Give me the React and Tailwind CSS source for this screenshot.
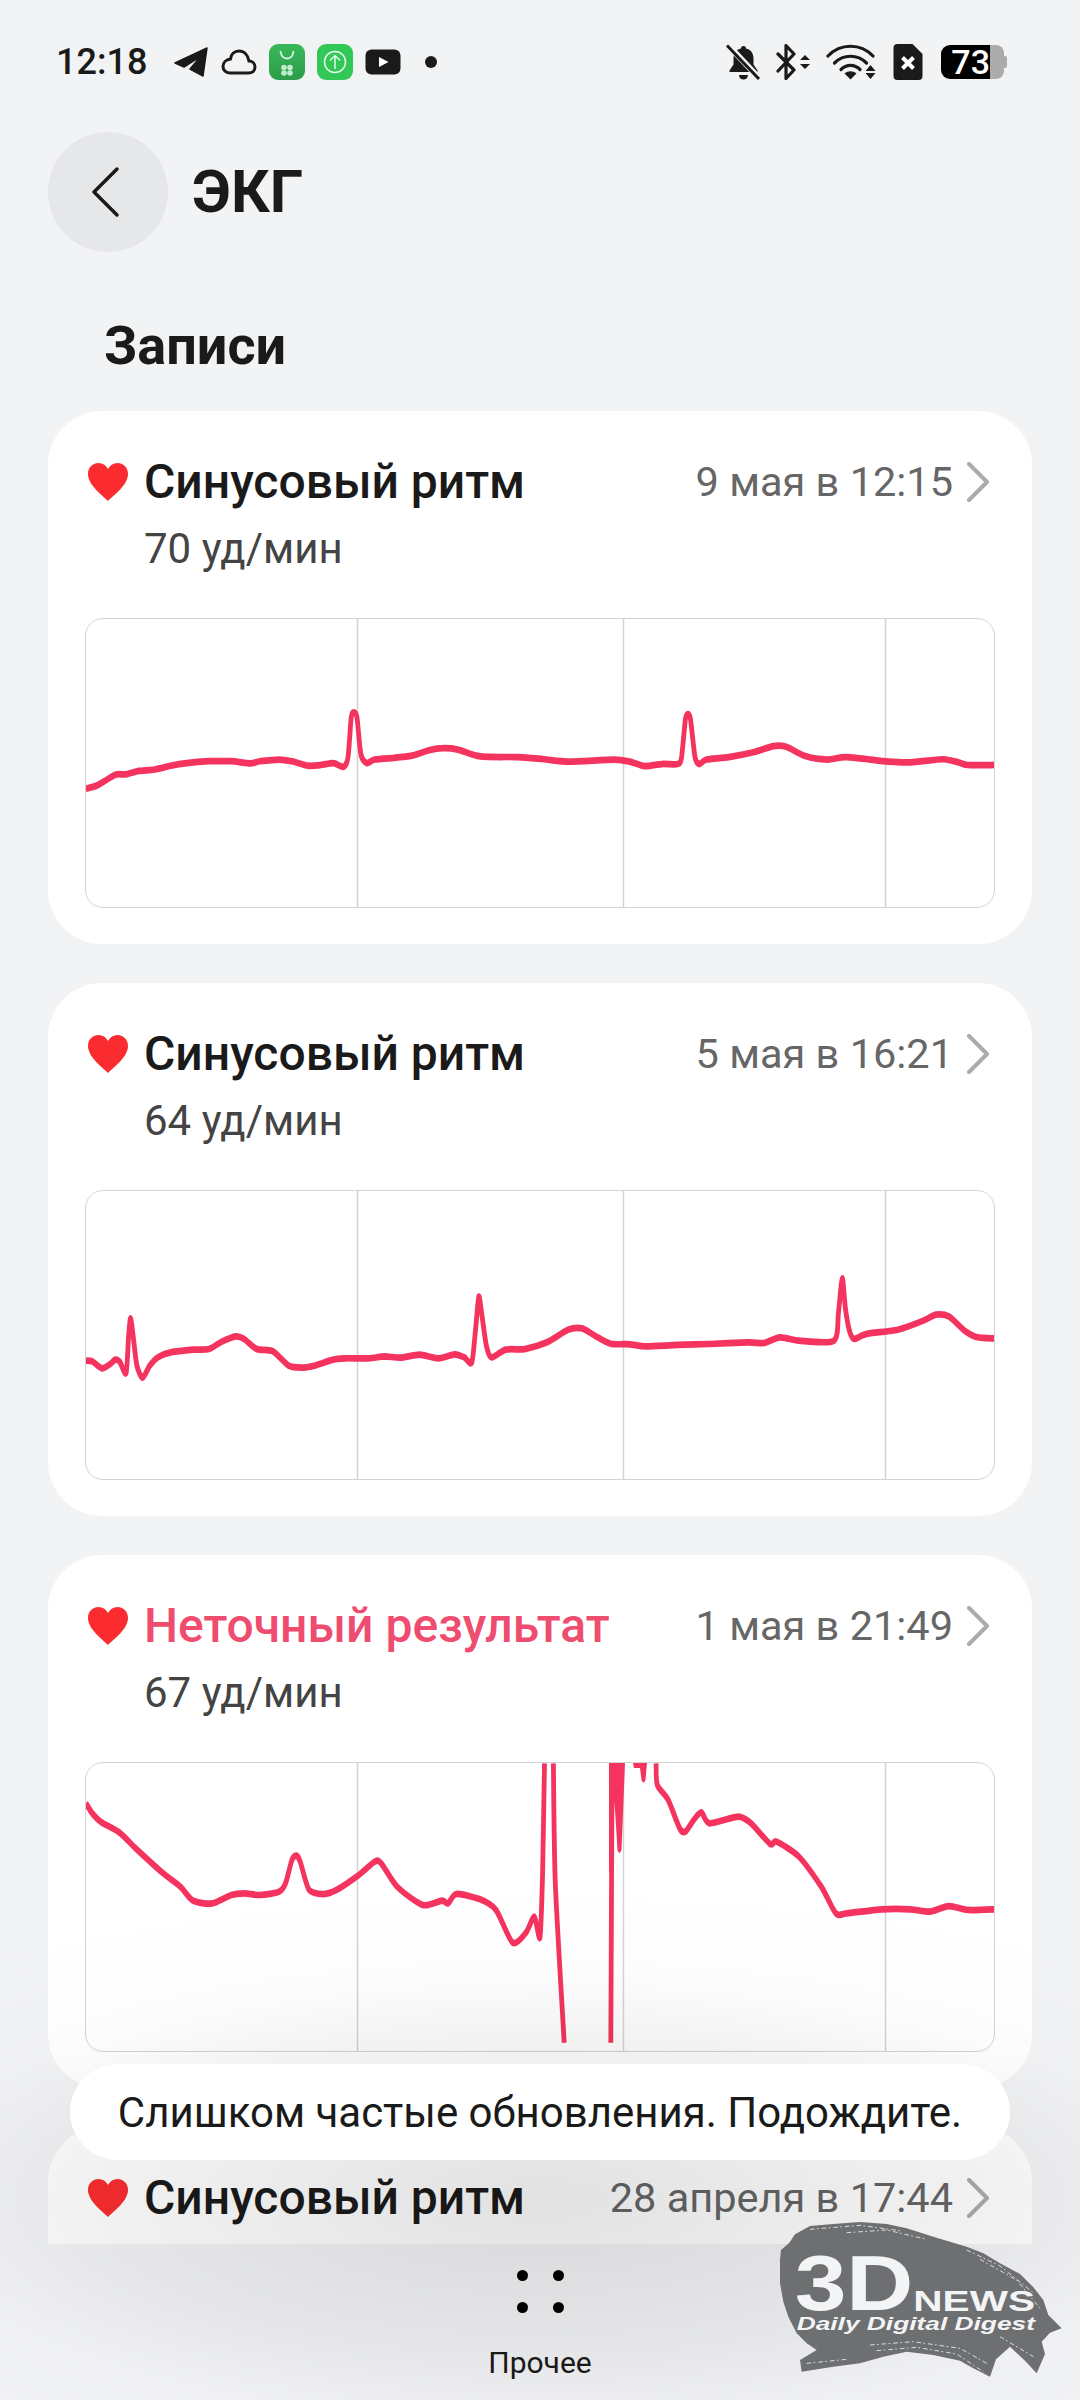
import React from 'react';

// Chart points are read off the zoomed reference, then mapped to the 910x290 chart box.
// The trace is stretched vertically in the picture, so it is drawn inside a scaled group.
const STRETCH = 1.4;
const mapX = (x) => 40 + x / 1.568 - 85;
const toPath = (points, k, off) => {
  const p = points.map(([x, y]) => [mapX(x), (y / k - off) / STRETCH]);
  let d = `M${p[0][0].toFixed(1)} ${p[0][1].toFixed(1)}`;
  for (let i = 0; i < p.length - 1; i++) {
    const a = p[i - 1] || p[i];
    const b = p[i];
    const c = p[i + 1];
    const e = p[i + 2] || c;
    const c1x = b[0] + (c[0] - a[0]) / 8;
    const c1y = b[1] + (c[1] - a[1]) / 8;
    const c2x = c[0] - (e[0] - b[0]) / 8;
    const c2y = c[1] - (e[1] - b[1]) / 8;
    d += `C${c1x.toFixed(1)} ${c1y.toFixed(1)} ${c2x.toFixed(1)} ${c2y.toFixed(1)} ${c[0].toFixed(1)} ${c[1].toFixed(1)}`;
  }
  return d;
};

const chart1 = [[[72,1132],[90,1122],[105,1105],[120,1090],[135,1090],[155,1080],[180,1076],[205,1065],[230,1057],[265,1052],[300,1052],[330,1058],[345,1052],[375,1047],[395,1052],[420,1065],[440,1063],[460,1057],[476,1068],[483,1040],[488,925],[492,910],[497,925],[503,1030],[512,1057],[525,1047],[555,1042],[585,1035],[610,1020],[632,1014],[655,1018],[690,1038],[750,1040],[790,1046],[830,1053],[900,1047],[925,1053],[948,1066],[975,1060],[1000,1060],[1006,1040],[1012,930],[1016,915],[1020,930],[1027,1040],[1034,1060],[1045,1047],[1080,1040],[1120,1025],[1150,1008],[1170,1010],[1200,1037],[1235,1047],[1265,1040],[1330,1053],[1365,1055],[1415,1046],[1440,1055],[1455,1063],[1497,1063]]].map((s) => toPath(s, 2.904, 219));

const chart2 = [[[72,575],[82,577],[97,598],[110,585],[118,572],[125,578],[135,612],[139,500],[142,448],[146,500],[152,590],[161,626],[172,590],[185,565],[205,550],[240,542],[265,540],[285,518],[307,502],[320,510],[340,540],[365,547],[390,590],[410,596],[430,590],[460,572],[480,568],[515,568],[540,562],[565,566],[595,557],[625,568],[650,556],[665,565],[677,580],[683,480],[688,383],[693,440],[700,530],[708,565],[730,542],[760,540],[795,520],[828,482],[850,478],[870,500],[895,524],[925,526],[950,532],[1000,528],[1050,525],[1110,520],[1135,522],[1160,505],[1190,515],[1245,515],[1252,430],[1258,328],[1263,420],[1270,490],[1277,510],[1295,495],[1345,482],[1385,455],[1405,437],[1425,442],[1450,485],[1470,505],[1497,508]]].map((s) => toPath(s, 3, 21));

const chart3 = [
  [[72,190],[82,220],[95,245],[125,278],[150,325],[190,395],[220,440],[240,482],[270,490],[300,465],[320,460],[345,465],[375,455],[385,430],[395,360],[402,347],[408,365],[422,450],[445,462],[465,450],[500,405],[525,365],[535,370],[560,440],[600,495],[630,482],[640,490],[653,462],[690,478],[715,510],[741,608],[762,578],[775,530],[784,592],[788,400],[791,70]],
  [[805,70],[808,430],[822,908]],
  [[895,908],[897,70]],
  [[966,70],[968,135],[985,180],[1003,265],[1012,275],[1025,240],[1037,217],[1050,250],[1095,230],[1115,250],[1145,312],[1155,305],[1190,350],[1225,440],[1248,520],[1265,520],[1320,508],[1365,508],[1395,515],[1425,498],[1455,510],[1497,508]],
].map((s) => toPath(s, 3, 22));

// the solid blobs where the trace leaves the top of the chart
const chart3Blobs = [
  'M524 1H540L536.500 88Q534 94 532.500 88L529.500 40L526 110L524 110Z',
  'M548 1H562L560.500 18Q558.500 23 556.500 18L555 6H549Z',
];

const records = [
  { title: 'Синусовый ритм', date: '9 мая в 12:15', bpm: '70 уд/мин', paths: chart1 },
  { title: 'Синусовый ритм', date: '5 мая в 16:21', bpm: '64 уд/мин', paths: chart2 },
  { title: 'Неточный результат', date: '1 мая в 21:49', bpm: '67 уд/мин', paths: chart3, blobs: chart3Blobs, bad: true },
  { title: 'Синусовый ритм', date: '28 апреля в 17:44', paths: [] },
];

const Heart = () => (
  <svg width="42" height="40" viewBox="0 0 42 40" className="ml-[2px] shrink-0">
    <path d="M21 39 C15 33 1 23 1 12 C1 5 6 1 11.500 1 C15.500 1 19 3 21 7 C23 3 26.500 1 30.500 1 C36 1 41 5 41 12 C41 23 27 33 21 39Z" fill="#fb2c2f" />
  </svg>
);

const Chart = ({ paths, blobs = [] }) => (
  <div className="relative h-[290px] overflow-hidden rounded-[18px] border-[1.500px] border-[#d3d3d3]">
    <svg width="910" height="290" viewBox="0 0 910 290" className="absolute left-[-1.500px] top-[-1.500px]" fill="none">
      <path d="M272.500 0V290M538.500 0V290M800.500 0V290" stroke="#d3d3d3" strokeWidth="1.500" />
      <g transform={`scale(1 ${STRETCH})`}>
        {paths.map((d, i) => (
          <path key={i} d={d} stroke="#f5335f" strokeWidth="4.800" strokeLinejoin="round" />
        ))}
      </g>
      {blobs.map((d, i) => (
        <path key={i} d={d} fill="#f5335f" />
      ))}
    </svg>
  </div>
);

const RecordCard = ({ title, date, bpm, paths, blobs, bad }) => (
  <div className="h-[533px] shrink-0 rounded-[54px] bg-white px-[37px] pt-[41px]">
    <div className="flex h-[60px] items-center">
      <Heart />
      <span className={`ml-[15px] text-[48px] font-medium ${bad ? 'text-[#ee4d6f]' : 'text-[#1a1a1a]'}`}>{title}</span>
      <span className="ml-auto text-[41.500px] text-[#666666]">{date}</span>
      <svg width="24" height="40" viewBox="0 0 24 40" className="ml-[13px] mr-[5px] shrink-0" fill="none">
        <path d="M3 2L21 20L3 38" stroke="#ababab" strokeWidth="4" strokeLinecap="round" strokeLinejoin="round" />
      </svg>
    </div>
    {bpm && <div className="mt-[6px] flex h-[60px] items-center pl-[59px] text-[42px] text-[#444444]">{bpm}</div>}
    {paths.length > 0 && <div className="mt-[40px]"><Chart paths={paths} blobs={blobs} /></div>}
  </div>
);

const StatusBar = () => (
  <div className="flex h-[124px] items-center pl-[56px] pr-[73px] text-[#1a1a1a]">
    <span className="w-[118px] shrink-0 text-[36px] font-medium">12:18</span>
    {/* telegram */}
    <svg width="34" height="30" viewBox="0 0 34 30" className="shrink-0">
      <path d="M1 16 L33 1 L29 29 L16 22 L27 9 L10 20 Z" fill="#1a1a1a" stroke="#1a1a1a" strokeWidth="1.500" strokeLinejoin="round" />
    </svg>
    {/* cloud */}
    <svg width="36" height="26" viewBox="0 0 35 26" className="ml-[13px] shrink-0" fill="none">
      <path d="M9 24H27C31 24 33.500 21.500 33.500 18C33.500 14.500 31 12 27.500 12C26.500 6 22.500 2 17.500 2C13 2 9.500 5 9 10C4.500 10.500 1.500 13.500 1.500 17.500C1.500 21 4.500 24 9 24Z" stroke="#1a1a1a" strokeWidth="3" />
    </svg>
    {/* store */}
    <div className="ml-[12px] h-[36px] w-[36px] shrink-0 rounded-[9px] bg-gradient-to-b from-[#38b85a] to-[#2c9c4a]">
      <svg width="36" height="36" viewBox="0 0 35 36" fill="none">
        <path d="M11 7C11.500 12.500 14 14.500 17.500 14.500C21 14.500 23.500 12.500 24 7" stroke="#d8f3df" strokeWidth="1.800" />
        <circle cx="14.500" cy="23.500" r="2.800" fill="#c2ebcd" /><circle cx="20.500" cy="23.500" r="2.800" fill="#c2ebcd" />
        <circle cx="14.500" cy="29" r="2.800" fill="#c2ebcd" /><circle cx="20.500" cy="29" r="2.800" fill="#c2ebcd" />
      </svg>
    </div>
    {/* upload */}
    <div className="ml-[12px] h-[36px] w-[36px] shrink-0 rounded-[9px] bg-[#31c858]">
      <svg width="36" height="36" viewBox="0 0 35 36" fill="none" stroke="#e6f9ea" strokeWidth="1.500">
        <circle cx="17.500" cy="18" r="10.500" />
        <path d="M17.500 25V11.500M12.500 16.500L17.500 11.500L22.500 16.500" />
      </svg>
    </div>
    {/* youtube */}
    <svg width="36" height="26" viewBox="0 0 35 26" className="ml-[12px] shrink-0">
      <rect x="0" y="0.500" width="35" height="25" rx="6" fill="#1a1a1a" />
      <path d="M13.500 8V18L23 13Z" fill="#ffffff" />
    </svg>
    <div className="ml-[24px] h-[12px] w-[12px] shrink-0 rounded-full bg-[#1a1a1a]" />

    <div className="ml-auto flex items-center">
      {/* muted bell */}
      <svg width="35" height="36" viewBox="0 0 35 36" className="shrink-0">
        <path d="M17.500 2a2.500 2.500 0 0 1 2.500 2.500c5 1 7.500 5 7.500 10v6l4 6v1.500H3.500V26.500l4-6v-6c0-5 2.500-9 7.500-10A2.500 2.500 0 0 1 17.500 2z" fill="#1a1a1a" />
        <path d="M13 31h9a4.500 4.500 0 0 1-9 0z" fill="#1a1a1a" />
        <path d="M2 1L34 35" stroke="#f2f3f5" strokeWidth="6" />
        <path d="M1 1.500L33 35" stroke="#1a1a1a" strokeWidth="3" />
      </svg>
      {/* bluetooth */}
      <svg width="36" height="36" viewBox="0 0 36 36" className="ml-[15px] shrink-0" fill="none">
        <path d="M2 10L18 26L10 34.500V1.500L18 10L2 27" stroke="#1a1a1a" strokeWidth="3.200" strokeLinejoin="round" strokeLinecap="round" />
        <path d="M29 11L34 16H24ZM29 25L34 20H24Z" fill="#1a1a1a" />
      </svg>
      {/* wifi */}
      <svg width="51" height="36" viewBox="0 0 50 36" className="ml-[14px] shrink-0" fill="none">
        <path d="M1.500 12C14 -1 34 -1 46.500 12" stroke="#1a1a1a" strokeWidth="3.200" strokeLinecap="round" />
        <path d="M8 19C17 10 31 10 40 19" stroke="#1a1a1a" strokeWidth="3.200" strokeLinecap="round" />
        <path d="M14.500 25.500C20 20 28 20 33.500 25.500" stroke="#1a1a1a" strokeWidth="3.200" strokeLinecap="round" />
        <path d="M18 29.500C21.500 26.500 26.500 26.500 30 29.500L24 35.500Z" fill="#1a1a1a" />
        <path d="M44 21L49 27H39ZM44 35L49 29H39Z" fill="#1a1a1a" />
      </svg>
      {/* sim */}
      <svg width="30" height="36" viewBox="0 0 29 36" className="ml-[16px] shrink-0">
        <path d="M4 0H19L29 10V32a4 4 0 0 1-4 4H4a4 4 0 0 1-4-4V4a4 4 0 0 1 4-4z" fill="#1a1a1a" />
        <path d="M9 13.500L20 24.500M20 13.500L9 24.500" stroke="#ffffff" strokeWidth="4" />
      </svg>
      {/* battery */}
      <div className="ml-[18px] flex w-[66px] shrink-0 items-center">
        <div className="flex h-[34px] w-[49px] items-center justify-end rounded-l-[9px] bg-black text-[34px] font-medium leading-none text-white">73</div>
        <div className="h-[34px] w-[14px] rounded-r-[8px] bg-[#ababab]" />
        <div className="h-[12px] w-[3px] rounded-r-[2px] bg-[#ababab]" />
      </div>
    </div>
  </div>
);

const Watermark = () => (
  <svg width="380" height="200" viewBox="0 0 1140 600" className="absolute left-[700px] top-[2200px]">
    <path
      d="M240 180L243 150L268 128L285 103L330 78L400 72L480 66L560 72L620 85L700 110L800 140L850 160L900 190L960 222L1000 262L1030 300L1045 345L1085 385L1050 398L1025 425L1035 462L1010 520L978 485L930 440L888 478L870 530L820 505L780 482L700 465L620 455L550 470L480 490L400 500L305 515L300 480L350 450L320 430L290 400L265 350L250 305L240 250Z"
      fill="#6e6f71"
    />
    {/* dry brush scratches along the edges */}
    <g stroke="#eef0f2" strokeWidth="2.500" strokeDasharray="14 7 5 9" fill="none">
      <path d="M330 88L480 76L600 92" />
      <path d="M440 98L560 90L680 118" />
      <path d="M800 150L900 198L1000 278" />
      <path d="M840 178L950 240L1020 325" />
      <path d="M900 410L1000 470" />
      <path d="M510 435L640 425L780 445L860 490" />
      <path d="M530 452L650 442L770 462L850 515" />
      <path d="M320 490L440 478" />
    </g>
    <g fill="#f3f4f5" fontFamily="Liberation Sans, sans-serif" fontWeight="700">
      <text x="284" y="331" fontSize="232" textLength="356" lengthAdjust="spacingAndGlyphs">3D</text>
      <text x="640" y="332" fontSize="88" textLength="365" lengthAdjust="spacingAndGlyphs">NEWS</text>
      <text x="290" y="390" fontSize="54" textLength="715" lengthAdjust="spacingAndGlyphs" fontStyle="italic">Daily Digital Digest</text>
    </g>
  </svg>
);

export default function App() {
  return (
    <div className="relative h-[2400px] w-[1080px] overflow-hidden bg-[#f2f3f5] font-['Roboto',sans-serif]">
      <StatusBar />

      {/* Header */}
      <div className="ml-[48px] mt-[8px] flex h-[120px] items-center">
        <button className="flex h-[120px] w-[120px] items-center justify-center rounded-full bg-[#e6e7e9]">
          <svg width="30" height="52" viewBox="0 0 30 52" fill="none" className="mr-[4px]">
            <path d="M26 3L3 26L26 49" stroke="#1a1a1a" strokeWidth="3.500" strokeLinecap="round" strokeLinejoin="round" />
          </svg>
        </button>
        <h1 className="ml-[24px] text-[60px] font-bold text-[#1a1a1a]">ЭКГ</h1>
      </div>

      <h2 className="flex h-[159px] items-center pl-[104px] pt-[28px] text-[54px] font-bold text-[#1a1a1a]">Записи</h2>

      {/* Records */}
      <div className="mx-[48px] flex flex-col gap-[39px]">
        {records.map((r, i) => (
          <RecordCard key={i} {...r} />
        ))}
      </div>

      {/* Bottom bar */}
      <div className="absolute bottom-0 left-0 right-0 flex h-[156px] flex-col items-center bg-[#f2f3f5] pt-[26px]">
        <div className="grid grid-cols-2 gap-x-[25px] gap-y-[21px]">
          <div className="h-[11px] w-[11px] rounded-full bg-black" />
          <div className="h-[11px] w-[11px] rounded-full bg-black" />
          <div className="h-[11px] w-[11px] rounded-full bg-black" />
          <div className="h-[11px] w-[11px] rounded-full bg-black" />
        </div>
        <span className="mt-[27px] text-[30px] text-[#1a1a1a]">Прочее</span>
      </div>

      {/* Shadow the toast casts over the list and the bar */}
      <div className="absolute left-0 right-0 top-[1880px] h-[520px] bg-[radial-gradient(ellipse_930px_320px_at_50%_320px,rgba(0,0,0,0.115)_0%,rgba(0,0,0,0.05)_50%,rgba(0,0,0,0.012)_70%,transparent_100%)]" />

      {/* Toast */}
      <div className="absolute left-[70px] top-[2064px] flex h-[96px] w-[940px] items-center justify-center rounded-[48px] bg-white text-[42px] text-[#1a1a1a]">
        Слишком частые обновления. Подождите.
      </div>

      <Watermark />
    </div>
  );
}
